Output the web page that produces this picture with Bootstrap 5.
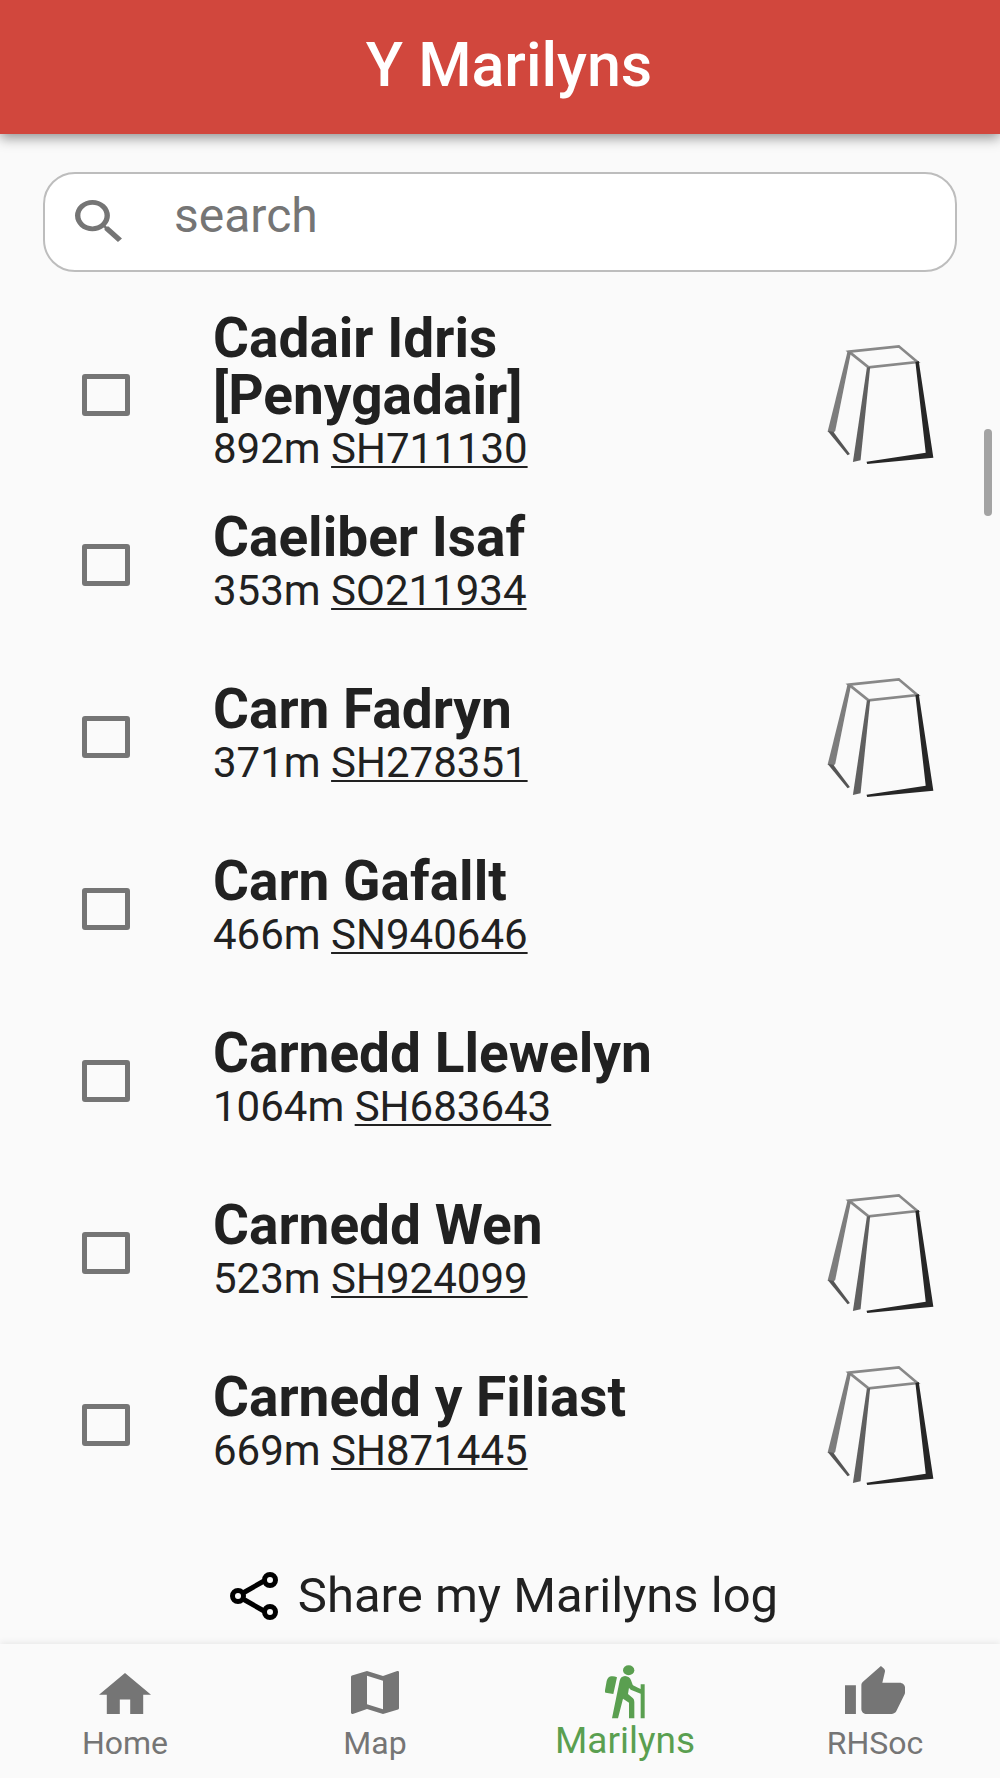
<!DOCTYPE html>
<html lang="en">
<head>
<meta charset="utf-8">
<meta name="viewport" content="width=device-width, initial-scale=1">
<title>Y Marilyns</title>
<link href="https://cdn.jsdelivr.net/npm/bootstrap@5.3.0/dist/css/bootstrap.min.css" rel="stylesheet">
<style>
body { font-family: Roboto, sans-serif; background: #fafafa; color: #212121; }
.app-bar { height: 134px; background: #d1473d; color: #fff; padding-bottom: 4px; box-shadow: 0 4px 12px rgba(0,0,0,.42); }
.app-bar h1 { font-size: 61px; line-height: 64px; font-weight: 500; padding-left: 18px; }
.search-box { height: 100px; margin: 38px 43px; padding: 0 30px; border: 2px solid #bdbdbd; border-radius: 32px; background: #fff; }
.search-box input { font-size: 48px; line-height: 56px; padding: 0 0 12px; color: #212121; }
.search-box input::placeholder { color: #757575; opacity: 1; }
.search-box input:focus { box-shadow: none; }
.search-box svg { margin: 0 52px 2px 0; }
.hill { min-height: 172px; padding: 0 66px 0 82px; }
.hill-two-line { min-height: 168px; }
.hill-check { appearance: none; width: 48px; height: 42px; border: 5px solid #757575; border-radius: 3px; margin: 0 83px 0 0; }
.hill-check:checked { background: #757575; }
.hill-text { padding-bottom: 6px; margin-right: 24px; }
.hill-name { font-size: 55px; line-height: 57px; font-weight: 700; }
.hill-info { font-size: 42px; line-height: 49px; }
.hill-info a { color: inherit; text-decoration-thickness: 2px; text-underline-offset: 3px; }
.hill-two-line .stone { margin-top: 20px; }
.share { margin-bottom: 16px; gap: 20px; font-size: 49px; line-height: 64px; color: #212121; }
.thumb { top: 429px; right: 8px; width: 8px; height: 87px; border-radius: 4px; background: #a3a3a3; }
.tabs { height: 134px; box-shadow: 0 -2px 6px rgba(0,0,0,.07); background: #fafafa; }
.tabs a { color: #757575; font-size: 32px; line-height: 36px; padding-bottom: 17px; text-decoration: none; }
.tabs svg { margin-bottom: 11px; }
.tabs a.current { color: #5a9f50; font-size: 37px; line-height: 40px; }
.tabs a.current svg { margin-bottom: 2px; }
</style>
</head>
<body>
<svg class="d-none" xmlns="http://www.w3.org/2000/svg">
  <symbol id="stone" viewBox="80 76 320 364">
    <path d="M145 99L295 83L351 130L204 146Z" fill="none" stroke="#888" stroke-width="8"/>
    <path d="M141 98L151 102L104 337L97 345L81 339Z" fill="#7d7d7d"/>
    <path d="M81 338L98 340L148 407L141 411Z" fill="#555"/>
    <path d="M199 147L209 145L180 426L157 431Z" fill="#606060"/>
    <path d="M345 130L355 127L399 418L200 437L198 430L376 403Z" fill="#262626"/>
  </symbol>
</svg>
<div class="d-flex flex-column min-vh-100 position-relative">
  <header class="app-bar d-flex align-items-center justify-content-center">
    <h1 class="m-0">Y Marilyns</h1>
  </header>
  <main class="flex-grow-1 d-flex flex-column">
    <form class="search-box d-flex align-items-center" role="search">
      <svg class="flex-shrink-0" width="47" height="42" viewBox="3 3 17.5 17.5" preserveAspectRatio="none" fill="#757575" aria-hidden="true"><path d="M15.5 14h-.79l-.28-.27A6.47 6.47 0 0 0 16 9.5 6.5 6.5 0 1 0 9.5 16c1.61 0 3.09-.59 4.23-1.57l.27.28v.79l5 4.99L20.49 19l-4.99-5zm-6 0C7.01 14 5 11.99 5 9.5S7.01 5 9.5 5 14 7.01 14 9.5 11.99 14 9.5 14z"/></svg>
      <input class="form-control border-0 bg-transparent" type="text" placeholder="search" aria-label="search">
    </form>
    <ul class="list-unstyled m-0">
      <li class="hill hill-two-line d-flex align-items-center">
        <input class="hill-check flex-shrink-0" type="checkbox" id="h1">
        <div class="hill-text flex-grow-1"><label class="hill-name d-block" for="h1">Cadair Idris [Penygadair]</label><div class="hill-info">892m <a href="#">SH711130</a></div></div>
        <svg class="stone flex-shrink-0" width="107" height="121" aria-hidden="true"><use href="#stone"/></svg>
      </li>
      <li class="hill d-flex align-items-center">
        <input class="hill-check flex-shrink-0" type="checkbox" id="h2">
        <div class="hill-text flex-grow-1"><label class="hill-name d-block" for="h2">Caeliber Isaf</label><div class="hill-info">353m <a href="#">SO211934</a></div></div>
      </li>
      <li class="hill d-flex align-items-center">
        <input class="hill-check flex-shrink-0" type="checkbox" id="h3">
        <div class="hill-text flex-grow-1"><label class="hill-name d-block" for="h3">Carn Fadryn</label><div class="hill-info">371m <a href="#">SH278351</a></div></div>
        <svg class="stone flex-shrink-0" width="107" height="121" aria-hidden="true"><use href="#stone"/></svg>
      </li>
      <li class="hill d-flex align-items-center">
        <input class="hill-check flex-shrink-0" type="checkbox" id="h4">
        <div class="hill-text flex-grow-1"><label class="hill-name d-block" for="h4">Carn Gafallt</label><div class="hill-info">466m <a href="#">SN940646</a></div></div>
      </li>
      <li class="hill d-flex align-items-center">
        <input class="hill-check flex-shrink-0" type="checkbox" id="h5">
        <div class="hill-text flex-grow-1"><label class="hill-name d-block" for="h5">Carnedd Llewelyn</label><div class="hill-info">1064m <a href="#">SH683643</a></div></div>
      </li>
      <li class="hill d-flex align-items-center">
        <input class="hill-check flex-shrink-0" type="checkbox" id="h6">
        <div class="hill-text flex-grow-1"><label class="hill-name d-block" for="h6">Carnedd Wen</label><div class="hill-info">523m <a href="#">SH924099</a></div></div>
        <svg class="stone flex-shrink-0" width="107" height="121" aria-hidden="true"><use href="#stone"/></svg>
      </li>
      <li class="hill d-flex align-items-center">
        <input class="hill-check flex-shrink-0" type="checkbox" id="h7">
        <div class="hill-text flex-grow-1"><label class="hill-name d-block" for="h7">Carnedd y Filiast</label><div class="hill-info">669m <a href="#">SH871445</a></div></div>
        <svg class="stone flex-shrink-0" width="107" height="121" aria-hidden="true"><use href="#stone"/></svg>
      </li>
    </ul>
    <button type="button" class="share btn border-0 py-0 pe-0 ps-2 mt-auto mx-auto d-flex align-items-center">
      <svg width="48" height="48" viewBox="0 0 48 48" fill="none" stroke="#000" stroke-width="5" aria-hidden="true"><path d="M13 21L34 9M13 27L34 39"/><circle cx="8" cy="24" r="5.5"/><circle cx="40" cy="8" r="5.5"/><circle cx="40" cy="40" r="5.5"/></svg>
      Share my Marilyns log
    </button>
  </main>
  <nav class="tabs row g-0 text-center">
    <a href="#" class="col d-flex flex-column align-items-center justify-content-end">
      <svg width="52" height="41" viewBox="2 3 20 17" preserveAspectRatio="none" fill="currentColor" aria-hidden="true"><path d="M10 20v-6h4v6h5v-8h3L12 3 2 12h3v8z"/></svg>
      Home
    </a>
    <a href="#" class="col d-flex flex-column align-items-center justify-content-end">
      <svg width="48" height="43" viewBox="3 3 18 18" preserveAspectRatio="none" fill="currentColor" aria-hidden="true"><path d="M20.5 3l-.16.03L15 5.1 9 3 3.36 4.9c-.21.07-.36.25-.36.48V20.5c0 .28.22.5.5.5l.16-.03L9 18.9l6 2.1 5.64-1.9c.21-.07.36-.25.36-.48V3.500c0-.28-.22-.5-.5-.5zM15 19l-6-2.110V5l6 2.110V19z"/></svg>
      Map
    </a>
    <a href="#" class="current col d-flex flex-column align-items-center justify-content-end" aria-current="page">
      <svg width="40" height="54" viewBox="312 105 120 162" fill="currentColor" aria-hidden="true"><ellipse cx="383" cy="121" rx="17" ry="15"/><path d="M330 139Q339 137 348 142L337 192L314 188Q311 187 312 181L317 153Q320 141 330 139ZM372 138Q386 139 390 151L395 164Q397 167 419 177V163H431V265H419V191L391 180Q387 178 384 173L381 192L396 205Q400 209 400 216V265H384V218L366 206L351 265H333L356 152Q359 139 372 138Z"/></svg>
      Marilyns
    </a>
    <a href="#" class="col d-flex flex-column align-items-center justify-content-end">
      <svg width="60" height="48" viewBox="1 1 22 20" preserveAspectRatio="none" fill="currentColor" aria-hidden="true"><path d="M1 21h4V9H1v12zm22-11c0-1.100-.9-2-2-2h-6.310l.95-4.570.03-.32c0-.41-.17-.79-.44-1.060L14.170 1 7.590 7.590C7.220 7.950 7 8.450 7 9v10c0 1.100.9 2 2 2h9c.83 0 1.540-.5 1.840-1.220l3.020-7.050c.09-.23.14-.47.14-.73v-2z"/></svg>
      RHSoc
    </a>
  </nav>
  <div class="thumb position-absolute" aria-hidden="true"></div>
</div>
<script src="https://cdn.jsdelivr.net/npm/bootstrap@5.3.0/dist/js/bootstrap.bundle.min.js"></script>
</body>
</html>
